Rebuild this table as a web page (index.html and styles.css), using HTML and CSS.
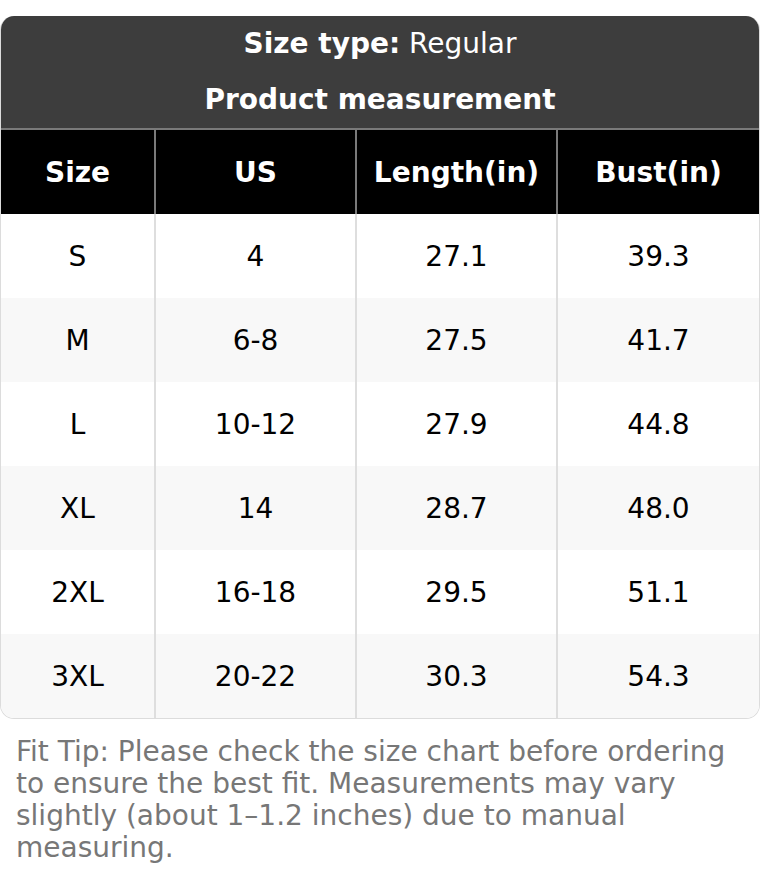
FILE: index.html
```html
<!DOCTYPE html>
<html lang="en">
<head>
<meta charset="utf-8">
<title>Size chart</title>
<link rel="stylesheet" href="styles.css">
</head>
<body>
<div class="page">
  <div class="card">
    <div class="title">
      <div class="title-line"><b>Size type:</b> Regular</div>
      <div class="title-line"><b>Product measurement</b></div>
    </div>
    <div class="grid">
      <div class="cell head">Size</div>
      <div class="cell head">US</div>
      <div class="cell head">Length(in)</div>
      <div class="cell head">Bust(in)</div>

      <div class="cell">S</div><div class="cell">4</div><div class="cell">27.1</div><div class="cell">39.3</div>
      <div class="cell alt">M</div><div class="cell alt">6-8</div><div class="cell alt">27.5</div><div class="cell alt">41.7</div>
      <div class="cell">L</div><div class="cell">10-12</div><div class="cell">27.9</div><div class="cell">44.8</div>
      <div class="cell alt">XL</div><div class="cell alt">14</div><div class="cell alt">28.7</div><div class="cell alt">48.0</div>
      <div class="cell">2XL</div><div class="cell">16-18</div><div class="cell">29.5</div><div class="cell">51.1</div>
      <div class="cell alt">3XL</div><div class="cell alt">20-22</div><div class="cell alt">30.3</div><div class="cell alt">54.3</div>
    </div>
  </div>
  <p class="tip">Fit Tip: Please check the size chart before ordering to ensure the best fit. Measurements may vary slightly (about 1–1.2 inches) due to manual measuring.</p>
</div>
</body>
</html>
```
FILE: styles.css
```css
html, body {
  margin: 0;
  padding: 0;
  background: #fff;
}
body {
  font-family: "DejaVu Sans", sans-serif;
  font-size: 28px;
  color: #000;
}
.page {
  padding-top: 16px;
}
.card {
  width: 760px;
  box-sizing: border-box;
  border: 1px solid #dcdcdc;
  border-top: none;
  border-radius: 14px;
  overflow: hidden;
}
.title {
  background: #3d3d3d;
  color: #fff;
  text-align: center;
  border-bottom: 2px solid #7a7a7a;
}
.title-line {
  height: 56px;
  line-height: 56px;
}
.grid {
  display: grid;
  grid-template-columns: 155px 201px 201px 1fr;
}
.cell {
  height: 84px;
  display: flex;
  align-items: center;
  justify-content: center;
  background: #fff;
  border-right: 2px solid #dedede;
}
.cell:nth-child(4n) {
  border-right: none;
}
.cell.alt {
  background: #f8f8f8;
}
.cell.head {
  background: #000;
  color: #fff;
  font-weight: bold;
  border-right-color: #7a7a7a;
}
.tip {
  margin: 17px 0 0;
  padding: 0 16px;
  color: #777;
  line-height: 32px;
}
```
